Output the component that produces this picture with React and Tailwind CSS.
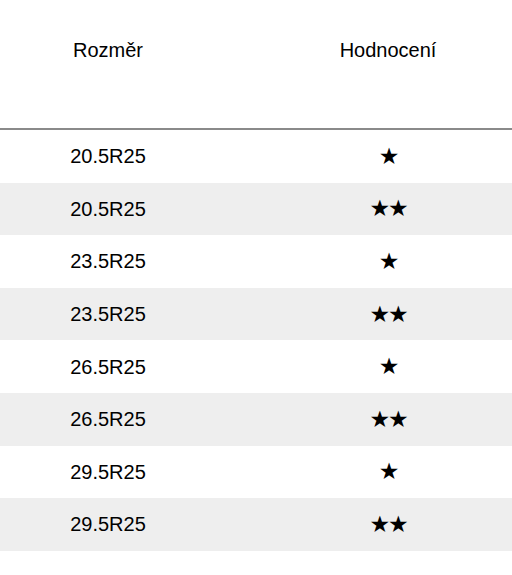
import React from 'react';

const rows = [
  { size: '20.5R25', rating: 1 },
  { size: '20.5R25', rating: 2 },
  { size: '23.5R25', rating: 1 },
  { size: '23.5R25', rating: 2 },
  { size: '26.5R25', rating: 1 },
  { size: '26.5R25', rating: 2 },
  { size: '29.5R25', rating: 1 },
  { size: '29.5R25', rating: 2 },
];

export default function App() {
  return (
    <div className="w-[512px] h-[575px] bg-white text-black font-['Liberation_Sans',Arial,sans-serif] text-[20px]">
      {/* Header */}
      <div className="grid grid-cols-[216px_1fr] h-[130px] border-b-2 border-[#8a8a8a]">
        <div className="pt-[38px] text-center leading-6">Rozměr</div>
        <div className="pt-[38px] pl-[48px] text-center leading-6">Hodnocení</div>
      </div>

      {/* Rows */}
      {rows.map((row, idx) => (
        <div
          key={idx}
          className={`grid grid-cols-[216px_1fr] h-[52.6px] items-center ${idx % 2 === 1 ? 'bg-[#eeeeee]' : 'bg-white'}`}
        >
          <div className="text-center">{row.size}</div>
          <div className="pl-[48px] text-center font-['DejaVu_Sans',sans-serif] text-[23px] leading-none tracking-[-2px]">
            {'★'.repeat(row.rating)}
          </div>
        </div>
      ))}
    </div>
  );
}
